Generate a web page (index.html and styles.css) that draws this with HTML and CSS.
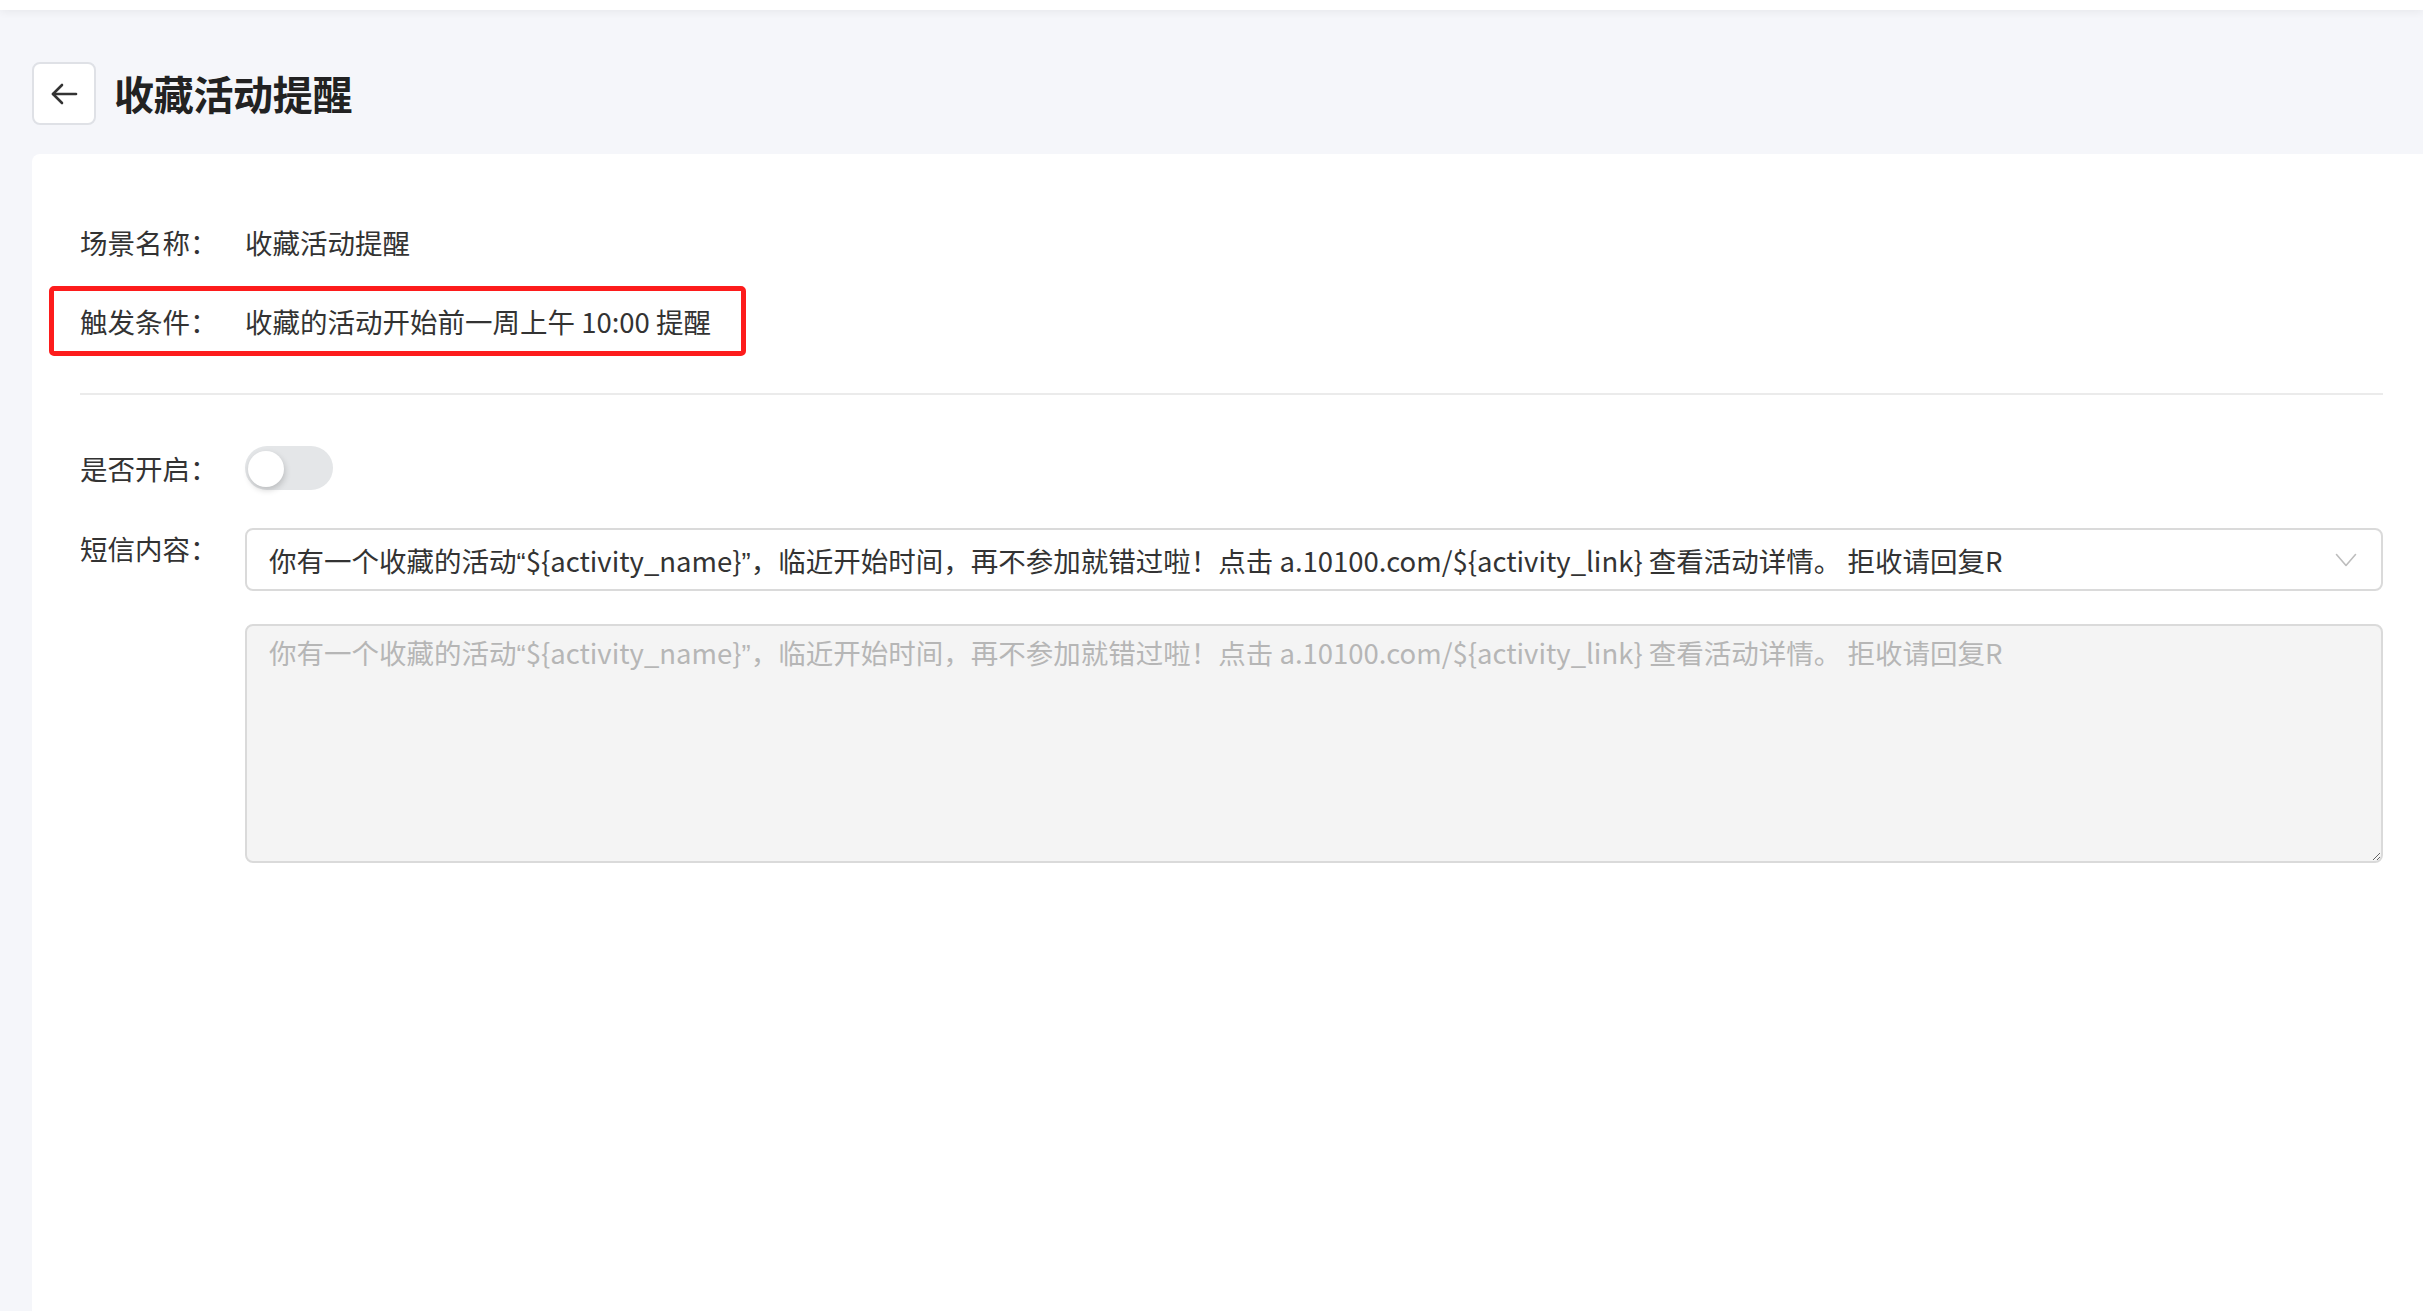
FILE: index.html
```html
<!DOCTYPE html>
<html lang="zh-CN">
<head>
<meta charset="utf-8">
<title>收藏活动提醒</title>
<link rel="stylesheet" href="styles.css">
</head>
<body>
<div class="topbar"></div>
<div class="page">
  <header class="page-header">
    <button class="back-btn" type="button" aria-label="返回">
      <svg width="28" height="24" viewBox="0 0 28 24" fill="none" stroke="#333" stroke-width="2.6" stroke-linecap="round" stroke-linejoin="round">
        <path d="M26 12H3"/>
        <path d="M12 3L3 12l9 9"/>
      </svg>
    </button>
    <h1 class="page-title">收藏活动提醒</h1>
  </header>
  <main class="card">
    <div class="info-row">
      <span class="label">场景名称：</span>
      <span class="value">收藏活动提醒</span>
    </div>
    <div class="info-row highlight">
      <span class="label">触发条件：</span>
      <span class="value">收藏的活动开始前一周上午 10:00 提醒</span>
    </div>
    <div class="divider"></div>
    <div class="form-row switch-row">
      <span class="label">是否开启：</span>
      <span class="switch"><span class="knob"></span></span>
    </div>
    <div class="form-row sms-row">
      <span class="label">短信内容：</span>
      <div class="sms-fields">
        <div class="select">
          <span class="select-text">你有一个收藏的活动<span class="q">“</span>${activity_name}<span class="q">”</span>，临近开始时间，再不参加就错过啦！点击 a.10100.com/${activity_link} 查看活动详情。 拒收请回复R</span>
          <svg class="chevron" width="22" height="14" viewBox="0 0 22 14" fill="none" stroke="#bdbdbd" stroke-width="1.6" stroke-linecap="round" stroke-linejoin="round">
            <path d="M1.5 1.5L11 12.5l9.5-11"/>
          </svg>
        </div>
        <div class="preview">你有一个收藏的活动<span class="q">“</span>${activity_name}<span class="q">”</span>，临近开始时间，再不参加就错过啦！点击 a.10100.com/${activity_link} 查看活动详情。 拒收请回复R</div>
      </div>
    </div>
  </main>
</div>
</body>
</html>
```

FILE: styles.css
```css
* {
  box-sizing: border-box;
}

html, body {
  margin: 0;
  padding: 0;
  height: 100%;
}

body {
  background: #f5f6fa;
  font-family: "Noto Sans CJK SC", "Noto Sans", "Liberation Sans", sans-serif;
  color: #333;
  overflow: hidden;
}

.topbar {
  height: 10px;
  background: #fff;
  box-shadow: 0 2px 8px rgba(0, 0, 0, 0.06);
  position: relative;
  z-index: 1;
}

.page {
  display: flex;
  flex-direction: column;
  height: calc(100% - 10px);
  padding-left: 32px;
}

.page-header {
  display: flex;
  align-items: center;
  gap: 18px;
  margin-top: 52px;
  height: 63px;
}

.back-btn {
  width: 64px;
  height: 63px;
  padding: 0;
  border: 2px solid #dfe1e6;
  border-radius: 8px;
  background: #fff;
  display: flex;
  align-items: center;
  justify-content: center;
  cursor: pointer;
}

.page-title {
  margin: 0 0 2px 0;
  font-size: 40px;
  font-weight: 700;
  color: #222;
  line-height: 1;
  letter-spacing: -0.3px;
}

.card {
  flex: 1;
  margin-top: 29px;
  background: #fff;
  border-top-left-radius: 8px;
  padding: 68px 40px 0 48px;
  font-size: 27.5px;
}

.info-row {
  display: flex;
  align-items: center;
  height: 40px;
  line-height: 40px;
}

.label {
  flex: 0 0 165px;
  white-space: nowrap;
  color: #333;
}

.value {
  white-space: nowrap;
  color: #333;
}

.q {
  font-family: "Liberation Sans", sans-serif;
}

.info-row.highlight {
  width: fit-content;
  height: 70px;
  margin-top: 24px;
  margin-left: -31px;
  padding: 0 30px 0 26px;
  border: 5px solid #fd1c1c;
  border-radius: 5px;
}

.divider {
  height: 2px;
  background: #ebebeb;
  margin-top: 37px;
}

.form-row {
  display: flex;
}

.switch-row {
  align-items: center;
  margin-top: 51px;
  height: 44px;
}

.switch {
  position: relative;
  width: 88px;
  height: 44px;
  border-radius: 22px;
  background: #e4e6e8;
}

.knob {
  position: absolute;
  left: 3px;
  top: 5px;
  width: 36px;
  height: 36px;
  border-radius: 50%;
  background: #fff;
  box-shadow: 1px 3px 6px rgba(0, 0, 0, 0.18);
}

.sms-row {
  margin-top: 38px;
  align-items: flex-start;
}

.sms-row .label {
  line-height: 40px;
}

.sms-fields {
  flex: 1;
  display: flex;
  flex-direction: column;
  gap: 33px;
}

.select {
  height: 63px;
  border: 2px solid #dadada;
  border-radius: 8px;
  display: flex;
  align-items: center;
  justify-content: space-between;
  padding: 0 24px 0 22px;
  background: #fff;
}

.select-text {
  white-space: nowrap;
  overflow: hidden;
  color: #333;
}

.chevron {
  flex: 0 0 auto;
  margin-left: 16px;
}

.preview {
  width: 100%;
  height: 239px;
  border: 2px solid #dadada;
  border-radius: 8px;
  background: #f4f4f4;
  padding: 6px 22px;
  line-height: 40px;
  color: #b6b6b6;
  overflow: auto;
  resize: both;
}
```
